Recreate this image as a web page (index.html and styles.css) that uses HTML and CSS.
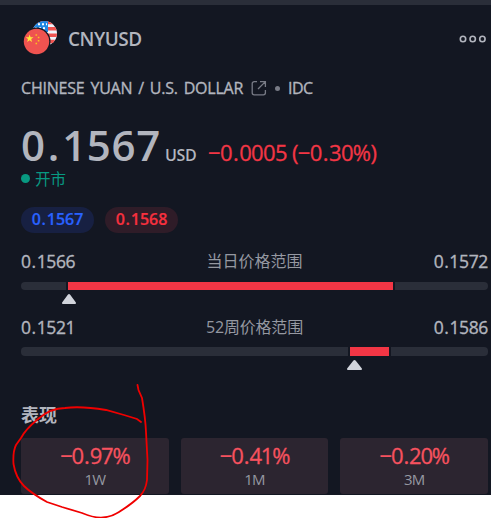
FILE: index.html
```html
<!DOCTYPE html>
<html lang="zh">
<head>
  <meta charset="UTF-8">
  <meta name="viewport" content="width=device-width, initial-scale=1.0">
  <title>CNYUSD</title>
  <link rel="stylesheet" href="styles.css">
</head>
<body>
  <div class="panel">
    <header class="header">
      <svg class="flags" width="36" height="36" viewBox="0 0 36 36">
        <defs>
          <clipPath id="us"><circle cx="23.5" cy="12.5" r="12.5"/></clipPath>
        </defs>
        <g clip-path="url(#us)">
          <rect x="10" width="26" height="26" fill="#f0f3fa"/>
          <path d="M10 1.5h26M10 7.8h26M10 14.2h26M10 20.5h26" stroke="#ef5350" stroke-width="3.6"/>
          <rect x="10" width="17" height="11" fill="#1e88e5"/>
          <path d="M17 3.2h9M14 7.2h12" stroke="#fff" stroke-width="2" stroke-dasharray="2 2"/>
        </g>
        <circle cx="15.5" cy="20.5" r="14" fill="#131722"/>
        <circle cx="15.5" cy="20.5" r="12.7" fill="#ef5350"/>
        <path d="M8.6 13.5l1 2.7 2.9.1-2.3 1.8.8 2.8-2.4-1.6-2.4 1.6.8-2.8-2.3-1.8 2.9-.1z" fill="#ffeb3b"/>
        <path d="M14.5 13.2h1.6v1.6h-1.6zM16.8 15.7h1.6v1.6h-1.6zM16.8 19h1.6v1.6h-1.6zM14.5 21.7h1.6v1.6h-1.6z" fill="#fdc01f"/>
      </svg>
      <span class="ticker">CNYUSD</span>
      <svg class="more" width="28" height="8" viewBox="0 0 28 8" fill="none" stroke="#b2b5be" stroke-width="1.6">
        <circle cx="4" cy="4" r="2.7"/><circle cx="13.7" cy="4" r="2.7"/><circle cx="23.4" cy="4" r="2.7"/>
      </svg>
    </header>

    <div class="symbol">
      <span class="symbol-name">CHINESE YUAN / U.S. DOLLAR</span>
      <svg class="link-icon" width="16" height="16" viewBox="0 0 16 16" fill="none" stroke="#787b86" stroke-width="1.3">
        <path d="M6 1.6H3.2a2 2 0 0 0-2 2v9.2a2 2 0 0 0 2 2h9.2a2 2 0 0 0 2-2V10M9 1.6h5.4V7M14.4 1.6L7 9"/>
      </svg>
      <span class="separator"></span>
      <span class="exchange">IDC</span>
    </div>

    <div class="quote">
      <span class="price">0<i>.</i>1567</span>
      <span class="currency">USD</span>
      <span class="change">−0<i>.</i>0005 (−0<i>.</i>30%)</span>
    </div>
    <div class="status"><span class="status-dot"></span>开市</div>

    <div class="pills">
      <span class="pill bid">0<i>.</i>1567</span>
      <span class="pill ask">0<i>.</i>1568</span>
    </div>

    <section class="range day">
      <div class="range-labels">
        <span class="num">0<i>.</i>1566</span><span class="range-title">当日价格范围</span><span class="num">0<i>.</i>1572</span>
      </div>
      <div class="track"><div class="fill"></div></div>
      <svg class="marker" width="14" height="10" viewBox="0 0 14 10"><path d="M5.8.8a1.6 1.6 0 0 1 2.4 0L13.7 8.2a1.1 1.1 0 0 1-.9 1.8H1.2a1.1 1.1 0 0 1-.9-1.8z" fill="#d1d4dc"/></svg>
    </section>

    <section class="range year">
      <div class="range-labels">
        <span class="num">0<i>.</i>1521</span><span class="range-title">52周价格范围</span><span class="num">0<i>.</i>1586</span>
      </div>
      <div class="track"><div class="fill"></div></div>
      <svg class="marker" width="15" height="10" viewBox="0 0 14 10" preserveAspectRatio="none"><path d="M5.8.8a1.6 1.6 0 0 1 2.4 0L13.7 8.2a1.1 1.1 0 0 1-.9 1.8H1.2a1.1 1.1 0 0 1-.9-1.8z" fill="#d1d4dc"/></svg>
    </section>

    <h2 class="section-title">表现</h2>
    <div class="cards">
      <div class="card"><span class="card-value">−0<i>.</i>97%</span><span class="card-label">1W</span></div>
      <div class="card"><span class="card-value">−0<i>.</i>41%</span><span class="card-label">1M</span></div>
      <div class="card"><span class="card-value">−0<i>.</i>20%</span><span class="card-label">3M</span></div>
    </div>
  </div>

  <!-- hand-drawn circle around the weekly figure -->
  <svg class="scribble" width="491" height="518" viewBox="0 0 491 518">
    <path d="M137.5 385L138.5 390L142 398C144 410 145.500 420 146 432L147.5 460L147 480C146 488 144 492 140 496C134 502 127 507 119 512C113 516 109 517 103 517.5C96 518 89 516 82 513L62 507L47 502C38 497 30 492 24 486C18 480 15 473 13.5 464C13 456 14 449 16 445L21 438C25 430 32 424 38 419C46 412 56 408 65 408C80 406 94 408 106 410L124 415L137 419L141 422"/>
  </svg>
</body>
</html>
```
FILE: styles.css
```css
* {
  box-sizing: border-box;
}

body {
  margin: 0;
  background: #fff;
  color: #b2b5be;
  font-family: "Open Sans", "Noto Sans CJK SC", sans-serif;
  overflow: hidden;
}

i {
  font-style: normal;
  margin: 0 .05em;
}

.panel {
  height: 495px;
  padding: 16px 3px 0 21px;
  background: #131722;
  border-top: 5px solid #2a2e39;
}

.header {
  display: flex;
  align-items: center;
  height: 36px;
}

.ticker {
  margin-left: 11px;
  font-size: 19px;
  font-weight: 600;
  letter-spacing: -.5px;
}

.more {
  margin-left: auto;
  margin-right: 1px;
}

.symbol {
  display: flex;
  align-items: center;
  height: 24px;
  margin-top: 19px;
  font-size: 16px;
  -webkit-text-stroke: .35px;
  white-space: nowrap;
}

.symbol-name {
  width: 230px;
  letter-spacing: -.2px;
  word-spacing: 1.9px;
}

.separator {
  width: 5px;
  height: 5px;
  margin: 0 8px;
  border-radius: 50%;
  background: #787b86;
}

.exchange {
  letter-spacing: -.5px;
}

.quote {
  display: flex;
  align-items: baseline;
  height: 50px;
  margin-top: 20px;
  line-height: 50px;
  white-space: nowrap;
}

.price {
  width: 144px;
  font-size: 42px;
  font-weight: 600;
  letter-spacing: .7px;
}

.currency {
  width: 43px;
  font-size: 16px;
  font-weight: 600;
  letter-spacing: -.4px;
}

.change {
  color: #f23645;
  font-size: 22px;
  letter-spacing: -.65px;
  -webkit-text-stroke: .3px;
}

.status {
  display: flex;
  align-items: center;
  height: 18px;
  margin-top: -1px;
  color: #089981;
  font-size: 15.5px;
}

.status-dot {
  width: 9px;
  height: 9px;
  margin-right: 5px;
  border-radius: 50%;
  background: #089981;
}

.pills {
  display: flex;
  gap: 11px;
  margin-top: 20px;
}

.pill {
  width: 73px;
  height: 26px;
  border-radius: 13px;
  line-height: 25px;
  text-align: center;
  font-size: 16px;
  font-weight: 600;
  -webkit-text-stroke: .2px;
}

.bid {
  background: #172042;
  color: #2962ff;
}

.ask {
  background: #2f1c28;
  color: #f7303e;
}

.range {
  height: 66px;
  padding-top: 17px;
}

.range-labels {
  display: flex;
  justify-content: space-between;
  height: 24px;
  line-height: 23px;
}

.num {
  font-size: 17.5px;
  letter-spacing: -.35px;
  -webkit-text-stroke: .35px;
}

.range-title {
  color: #9598a1;
  font-size: 16px;
}

.year .range-title {
  letter-spacing: -.2px;
}

.track {
  height: 8px;
  margin-top: 8px;
  border-radius: 4px;
  background: #2a2e39;
}

.year .track {
  height: 9px;
  margin-top: 7px;
}

.fill {
  width: 329px;
  height: 100%;
  margin-left: 45px;
  border: solid #131722;
  border-width: 0 2px;
  background: #f23645;
}

.year .fill {
  width: 43px;
  margin-left: 327px;
}

.marker {
  display: block;
  margin: 4px 0 0 41px;
}

.year .marker {
  margin-left: 326px;
}

.section-title {
  height: 26px;
  margin: 37px 0 0;
  line-height: 26px;
  font-size: 18px;
  font-weight: 700;
}

.cards {
  display: grid;
  grid-template-columns: repeat(3, 1fr);
  gap: 12px;
  margin-top: 10px;
}

.card {
  display: flex;
  flex-direction: column;
  align-items: center;
  height: 56px;
  padding-top: 4px;
  border-radius: 3px;
  background: #2c2530;
}

.card-value {
  height: 27px;
  line-height: 27px;
  color: #f7525f;
  font-size: 22px;
  letter-spacing: -1.2px;
  -webkit-text-stroke: .3px;
}

.card-label {
  line-height: 20px;
  color: #9598a1;
  font-size: 15px;
  letter-spacing: -.8px;
}

.scribble {
  position: absolute;
  left: 0;
  top: 0;
  fill: none;
  stroke: #f00000;
  stroke-width: 1.8;
  stroke-linecap: round;
}
```
